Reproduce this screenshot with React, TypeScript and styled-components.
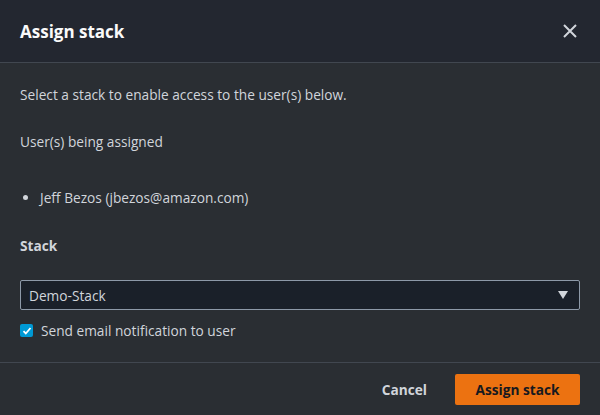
import { createGlobalStyle, styled } from "styled-components";

const Global = createGlobalStyle`
  html, body {
    margin: 0;
    padding: 0;
    background: #2a2e33;
  }
  body {
    font-family: "Open Sans", "Noto Sans", sans-serif;
  }
`;

export default function App() {
  return (
    <>
      <Global />
      <Modal>
        <Header>
          <Title>Assign stack</Title>
          <CloseButton aria-label="Close">
            <svg width="16" height="16" viewBox="0 0 16 16">
              <path d="M2 2l12 12M14 2L2 14" stroke="#d1d5db" strokeWidth="2" fill="none" />
            </svg>
          </CloseButton>
        </Header>
        <Body>
          <Text>Select a stack to enable access to the user(s) below.</Text>
          <Text>User(s) being assigned</Text>
          <UserList>
            <li>Jeff Bezos (jbezos@amazon.com)</li>
          </UserList>
          <Label>Stack</Label>
          <Select>
            <span>Demo-Stack</span>
            <svg width="12" height="10" viewBox="0 0 12 10">
              <path d="M1 1h10L6 9z" fill="#d1d5db" />
            </svg>
          </Select>
          <CheckRow>
            <Box>
              <svg width="10" height="10" viewBox="0 0 10 10">
                <path d="M1.5 5.2l2.3 2.3L8.5 2" stroke="#fff" strokeWidth="1.8" fill="none" />
              </svg>
            </Box>
            <span>Send email notification to user</span>
          </CheckRow>
        </Body>
        <Footer>
          <LinkButton>Cancel</LinkButton>
          <PrimaryButton>Assign stack</PrimaryButton>
        </Footer>
      </Modal>
    </>
  );
}

const Modal = styled.div`
  width: 600px;
  height: 415px;
  display: flex;
  flex-direction: column;
  background: #2a2e33;
  color: #d1d5db;
  font-size: 13.7px;
`;

const Header = styled.div`
  height: 62px;
  display: flex;
  align-items: center;
  justify-content: space-between;
  padding: 0 20px;
  background: #232730;
  border-bottom: 1px solid #414750;
`;

const Title = styled.div`
  font-size: 17px;
  font-weight: 700;
  color: #fafafa;
`;

const CloseButton = styled.div`
  display: flex;
  margin-right: 2px;
`;

const Body = styled.div`
  flex: 1;
  padding: 0 20px;
  display: flex;
  flex-direction: column;
`;

const Text = styled.div`
  margin-top: 23px;
  margin-bottom: 6px;
  line-height: 18px;
`;

const UserList = styled.ul`
  margin: 32px 0 0;
  padding-left: 20px;
  line-height: 18px;
`;

const Label = styled.div`
  margin-top: 30px;
  font-weight: 700;
  line-height: 18px;
`;

const Select = styled.div`
  margin-top: 25px;
  height: 30px;
  box-sizing: border-box;
  border: 1px solid #8d99a8;
  border-radius: 2px;
  background: #1a2029;
  display: flex;
  align-items: center;
  justify-content: space-between;
  padding: 0 10px 0 8px;
`;

const CheckRow = styled.div`
  margin-top: 11px;
  display: flex;
  align-items: center;
  gap: 8px;
`;

const Box = styled.div`
  width: 13px;
  height: 13px;
  border-radius: 2px;
  background: #0099d4;
  display: flex;
  align-items: center;
  justify-content: center;
`;

const Footer = styled.div`
  height: 52px;
  border-top: 1px solid #414750;
  display: flex;
  align-items: center;
  justify-content: flex-end;
  gap: 28px;
  padding: 0 20px;
`;

const LinkButton = styled.div`
  font-weight: 700;
  color: #d1d5db;
`;

const PrimaryButton = styled.div`
  width: 125px;
  height: 31px;
  box-sizing: border-box;
  border-radius: 2px;
  background: #ec7211;
  color: #16191f;
  font-weight: 700;
  display: flex;
  align-items: center;
  justify-content: center;
`;
